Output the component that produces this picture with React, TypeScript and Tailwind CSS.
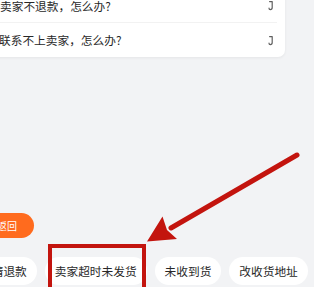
import React from 'react'

const faqs = ['卖家不退款，怎么办?', '联系不上卖家，怎么办?']
const chips = ['申请退款', '卖家超时未发货', '未收到货', '改收货地址']

function HookIcon() {
  return (
    <svg width="7" height="11" viewBox="0 0 7 11" fill="none">
      <path
        d="M2.6 1.6 H5.2 V7.6 Q5.2 9.6 3.4 9.6 Q2 9.6 2 8.2"
        stroke="#5f5f5f"
        strokeWidth="1.2"
        strokeLinecap="round"
        strokeLinejoin="round"
      />
    </svg>
  )
}

export default function App() {
  return (
    <div
      className="relative w-[314px] h-[287px] overflow-hidden bg-[#f2f3f5] flex flex-col"
      style={{ fontFamily: '"Noto Sans CJK SC", "Noto Sans", sans-serif' }}
    >
      {/* 问题卡片 */}
      <div className="mt-[-11px] ml-[-12px] w-[297px] bg-white rounded-[7px] shadow-[0_1px_3px_rgba(0,0,0,0.06)] flex flex-col">
        <div className="h-[33px] flex items-center justify-between pl-[12px] pr-[11px]">
          <span className="text-[11.7px] text-[#282828] leading-none">{faqs[0]}</span>
          <HookIcon />
        </div>
        <div className="h-px bg-[#f2f2f2] ml-[12px] mr-[8px]" />
        <div className="h-[34px] flex items-center justify-between pl-[11px] pr-[11px]">
          <span className="text-[11.7px] text-[#282828] leading-none">{faqs[1]}</span>
          <HookIcon />
        </div>
      </div>

      {/* 返回按钮 */}
      <div className="mt-[156px] ml-[-16px] w-[50px] h-[25px] rounded-full bg-[#ff6b1e] flex items-center justify-end pr-[17px]">
        <span className="text-[10px] text-white leading-none">返回</span>
      </div>

      {/* 快捷标签 */}
      <div className="mt-[19px] ml-[-30px] flex gap-[8px]">
        {chips.map(c => (
          <div
            key={c}
            className="h-[28px] shrink-0 rounded-full bg-white px-[10px] flex items-center text-[11.7px] text-[#282828] leading-none"
          >
            {c}
          </div>
        ))}
      </div>

      {/* 标注框 */}
      <div className="absolute left-[48px] top-[244px] w-[98px] h-[50px] border-[4px] border-[#c3140e]" />

      {/* 标注箭头 */}
      <svg className="absolute inset-0" width="314" height="287" viewBox="0 0 314 287">
        <line x1="297" y1="155" x2="171" y2="228" stroke="#c3140e" strokeWidth="5" strokeLinecap="round" />
        <polygon points="147,241.5 162.5,216.5 167,230 177,239" fill="#c3140e" />
      </svg>
    </div>
  )
}
